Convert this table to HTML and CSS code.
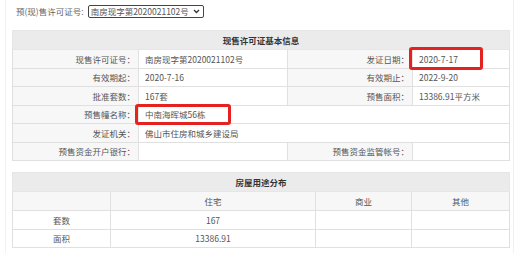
FILE: index.html
```html
<!DOCTYPE html>
<html lang="zh">
<head>
<meta charset="utf-8">
<link rel="stylesheet" href="styles.css">
</head>
<body>
<div class="page">
  <div class="picker">
    <span class="picker-label">预(现)售许可证号:</span>
    <span class="select"><span class="select-text">南房现字第2020021102号</span>
      <svg class="chev" width="7" height="5" viewBox="0 0 7 5"><path d="M1 1 L3.5 3.5 L6 1" fill="none" stroke="#333" stroke-width="1.3"/></svg>
    </span>
  </div>

  <table class="info">
    <colgroup><col class="c1"><col class="c2"><col class="c3"><col class="c4"></colgroup>
    <tr class="head"><th colspan="4">现售许可证基本信息</th></tr>
    <tr><td class="lbl">现售许可证号：</td><td>南房现字第2020021102号</td><td class="lbl">发证日期：</td><td class="mark-cell">2020-7-17<span class="mark mark-date"></span></td></tr>
    <tr><td class="lbl">有效期起：</td><td>2020-7-16</td><td class="lbl">有效期止：</td><td>2022-9-20</td></tr>
    <tr><td class="lbl">批准套数：</td><td>167套</td><td class="lbl">预售面积：</td><td>13386.91平方米</td></tr>
    <tr><td class="lbl">预售幢名称：</td><td colspan="3" class="mark-cell">中南海晖城56栋<span class="mark mark-name"></span></td></tr>
    <tr><td class="lbl">发证机关：</td><td colspan="3">佛山市住房和城乡建设局</td></tr>
    <tr><td class="lbl">预售资金开户银行：</td><td></td><td class="lbl">预售资金监管帐号：</td><td></td></tr>
  </table>

  <table class="use">
    <colgroup><col class="u1"><col class="u2"><col class="u3"><col class="u4"></colgroup>
    <tr class="head"><th colspan="4">房屋用途分布</th></tr>
    <tr class="sub"><td></td><td>住宅</td><td>商业</td><td>其他</td></tr>
    <tr><td>套数</td><td>167</td><td></td><td></td></tr>
    <tr><td>面积</td><td>13386.91</td><td></td><td></td></tr>
  </table>
</div>
</body>
</html>
```

FILE: styles.css
```css
html, body {
  margin: 0;
  padding: 0;
  background: #fff;
}
body {
  font-family: "Noto Sans CJK SC", "Noto Sans", sans-serif;
  font-size: 8.5px;
  color: #555;
}
.page {
  margin-left: 5px;
  width: 509px;
  height: 253px;
  box-sizing: border-box;
  border-left: 1px solid #f1f1f1;
  border-right: 1px solid #f1f1f1;
  padding: 4px 6px 0 6px;
}
.picker {
  display: flex;
  align-items: center;
  height: 14px;
  padding-left: 4px;
  gap: 4px;
}
.picker-label {
  color: #666;
  white-space: nowrap;
}
.select {
  display: inline-flex;
  align-items: center;
  gap: 3px;
  height: 13px;
  box-sizing: border-box;
  border: 1px solid #444;
  border-radius: 2px;
  padding: 0 3px 0 2px;
  color: #555;
  width: 116px;
  white-space: nowrap;
  flex: none;
}
.chev { margin-left: auto; flex: none; }

table {
  border-collapse: collapse;
  width: 497px;
  table-layout: fixed;
}
tr { height: 18.5px; }
td, th {
  border: 1px solid #e0e0e0;
  padding: 0 6px;
  white-space: nowrap;
}
.info { margin-top: 12px; }
.info .c1 { width: 126px; }
.info .c2 { width: 149px; }
.info .c3 { width: 125px; }
.info .c4 { width: 97px; }
.head { height: 19px; }
.head th {
  background: #ebebeb;
  color: #333;
  font-weight: bold;
  text-align: center;
  border-color: #e6e6e6;
}
.lbl {
  background: #f7f7f7;
  text-align: right;
  padding-right: 3px;
  color: #666;
}
.info td { color: #555; }
.mark-cell { position: relative; }
.mark {
  position: absolute;
  border: 3px solid #e42320;
  border-radius: 3px;
  box-sizing: border-box;
  pointer-events: none;
}
.mark-date { left: -4px; top: -3px; width: 74px; height: 23px; }
.mark-name { left: -4px; top: -2px; width: 96px; height: 21px; }

.use { margin-top: 11px; }
.use .u1 { width: 98px; }
.use .u2 { width: 205px; }
.use .u3 { width: 96px; }
.use .u4 { width: 98px; }
.use td { text-align: center; color: #555; }
.use .sub { height: 19px; }
.use .sub td { background: #f7f7f7; }
```
